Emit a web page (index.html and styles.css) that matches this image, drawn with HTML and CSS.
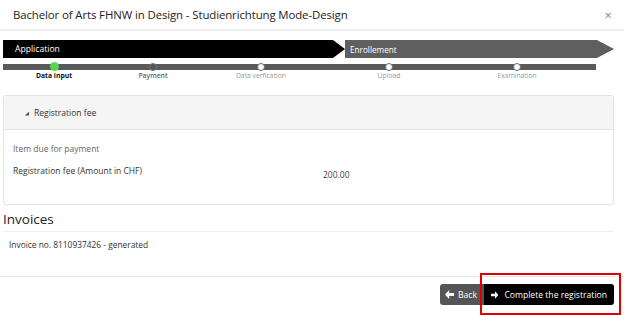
FILE: index.html
```html
<!DOCTYPE html>
<html>
<head>
<meta charset="utf-8">
<link rel="stylesheet" href="styles.css">
</head>
<body>
<div class="modal">
  <div class="modal-header">
    <span class="title">Bachelor of Arts FHNW in Design - Studienrichtung Mode-Design</span>
    <span class="close">×</span>
  </div>
  <div class="steps">
    <div class="phases">
      <div class="phase phase-app">Application</div>
      <div class="phase phase-enr">Enrollement</div>
    </div>
    <div class="progress">
      <div class="step done"><span class="dot"></span><span class="label">Data input</span></div>
      <div class="step current"><span class="dot"></span><span class="label">Payment</span></div>
      <div class="step"><span class="dot"></span><span class="label">Data verfication</span></div>
      <div class="step"><span class="dot"></span><span class="label">Upload</span></div>
      <div class="step"><span class="dot"></span><span class="label">Examination</span></div>
    </div>
  </div>
  <div class="panel">
    <div class="panel-heading"><span class="caret">◢</span>Registration fee</div>
    <div class="panel-body">
      <div class="muted">Item due for payment</div>
      <div class="fee-row">
        <span class="fee-label">Registration fee (Amount in CHF)</span>
        <span class="fee-value">200.00</span>
      </div>
    </div>
  </div>
  <h3 class="invoices">Invoices</h3>
  <div class="invoice-line">Invoice no. 8110937426 - generated</div>
  <div class="modal-footer">
    <button class="btn btn-back">
      <svg width="9" height="9" viewBox="0 0 10 10"><path d="M10 3.2H4.6V0L0 5l4.6 5V6.8H10z" fill="#fff"/></svg>
      Back
    </button>
    <button class="btn btn-complete">
      <svg width="10" height="10" viewBox="0 0 10 10"><path d="M0 3.2h5.4V0L10 5l-4.6 5V6.8H0z" fill="#fff"/></svg>
      Complete the registration
    </button>
    <div class="highlight"></div>
  </div>
</div>
</body>
</html>
```
FILE: styles.css
```css
* { box-sizing: border-box; }
html, body { margin: 0; padding: 0; background: #fff; }
body {
  width: 624px;
  height: 315px;
  overflow: hidden;
  font-family: "Open Sans", "Noto Sans", sans-serif;
  color: #333;
}
.modal { position: relative; }
.modal-header {
  height: 31px;
  padding: 0 12px 0 13px;
  display: flex;
  align-items: center;
  justify-content: space-between;
  border-bottom: 2px solid #f0f0f0;
}
.title { font-size: 11.4px; color: #222; letter-spacing: -0.1px; }
.close { font-size: 13px; color: #888; }
.steps { padding: 9px 10px 0 3px; }
.phases { display: flex; height: 18px; }
.phase {
  color: #fff;
  font-size: 8.6px;
  display: flex;
  align-items: center;
}
.phase-app {
  width: 342px;
  background: #000;
  padding-left: 12px;
  clip-path: polygon(0 0, 330px 0, 342px 50%, 330px 100%, 0 100%);
}
.phase-enr {
  width: 269px;
  background: #5f5f5f;
  padding-left: 5px;
  font-size: 8.2px;
  clip-path: polygon(0 0, 252px 0, 269px 50%, 252px 100%, 0 100%);
}
.progress {
  margin-top: 6px;
  display: grid;
  grid-template-columns: 102px 96px 120px 136px 120px;
  background: linear-gradient(#5a5a5a, #5a5a5a) no-repeat 0 0 / 593px 6px;
}
.step {
  display: flex;
  flex-direction: column;
  align-items: center;
}
.dot {
  width: 8px;
  height: 8px;
  margin-top: -1px;
  border-radius: 50%;
  background: #fff;
  border: 1px solid #666;
}
.step.done .dot { background: #5ad552; border-color: #5ad552; width: 9px; height: 9px; margin-top: -2px; }
.step.current .dot { background: #555; border-color: #777; }
.label {
  font-size: 6.8px;
  line-height: 10px;
  color: #9a9a9a;
}
.step.done .label { color: #111; font-weight: 700; }
.step.current .label { color: #666; font-weight: 600; }
.panel {
  margin: 14px 10px 0 3px;
  border: 1px solid #e3e3e3;
  border-radius: 3px;
  height: 110px;
}
.panel-heading {
  height: 34px;
  background: #f5f5f5;
  border-bottom: 1px solid #e3e3e3;
  padding-left: 21px;
  display: flex;
  align-items: center;
  font-size: 8.5px;
  color: #333;
}
.caret { font-size: 5px; margin-right: 5px; color: #444; }
.panel-body { padding: 13px 9px 0; font-size: 8.5px; }
.muted { color: #666; line-height: 12px; }
.fee-row { display: flex; margin-top: 10px; line-height: 12px; }
.fee-label { width: 310px; color: #333; }
.fee-value { padding-top: 4px; color: #444; }
.invoices {
  margin: 5px 10px 0 3px;
  font-size: 13.5px;
  font-weight: 400;
  line-height: 18px;
  padding-bottom: 3px;
  border-bottom: 1px solid #eee;
  color: #222;
}
.invoice-line {
  margin: 7px 0 0 9px;
  font-size: 8.4px;
  color: #333;
  line-height: 12px;
}
.modal-footer {
  margin-top: 25px;
  border-top: 1px solid #e8e8e8;
  height: 40px;
  display: flex;
  justify-content: flex-end;
  align-items: flex-start;
  padding: 7px 10px 0 0;
}
.btn {
  height: 21px;
  border: none;
  color: #fff;
  font-family: inherit;
  font-size: 8.6px;
  white-space: nowrap;
  display: flex;
  align-items: center;
  gap: 4px;
  padding: 0 7px;
}
.btn-back { background: #555; border-radius: 3px 0 0 3px; width: 44px; padding-left: 5px; }
.btn-complete { background: #000; border-radius: 0 3px 3px 0; width: 130px; gap: 6px; }
.highlight {
  position: absolute;
  left: 480px;
  top: 273px;
  width: 141px;
  height: 42px;
  border: 2px solid #e00000;
}
```
